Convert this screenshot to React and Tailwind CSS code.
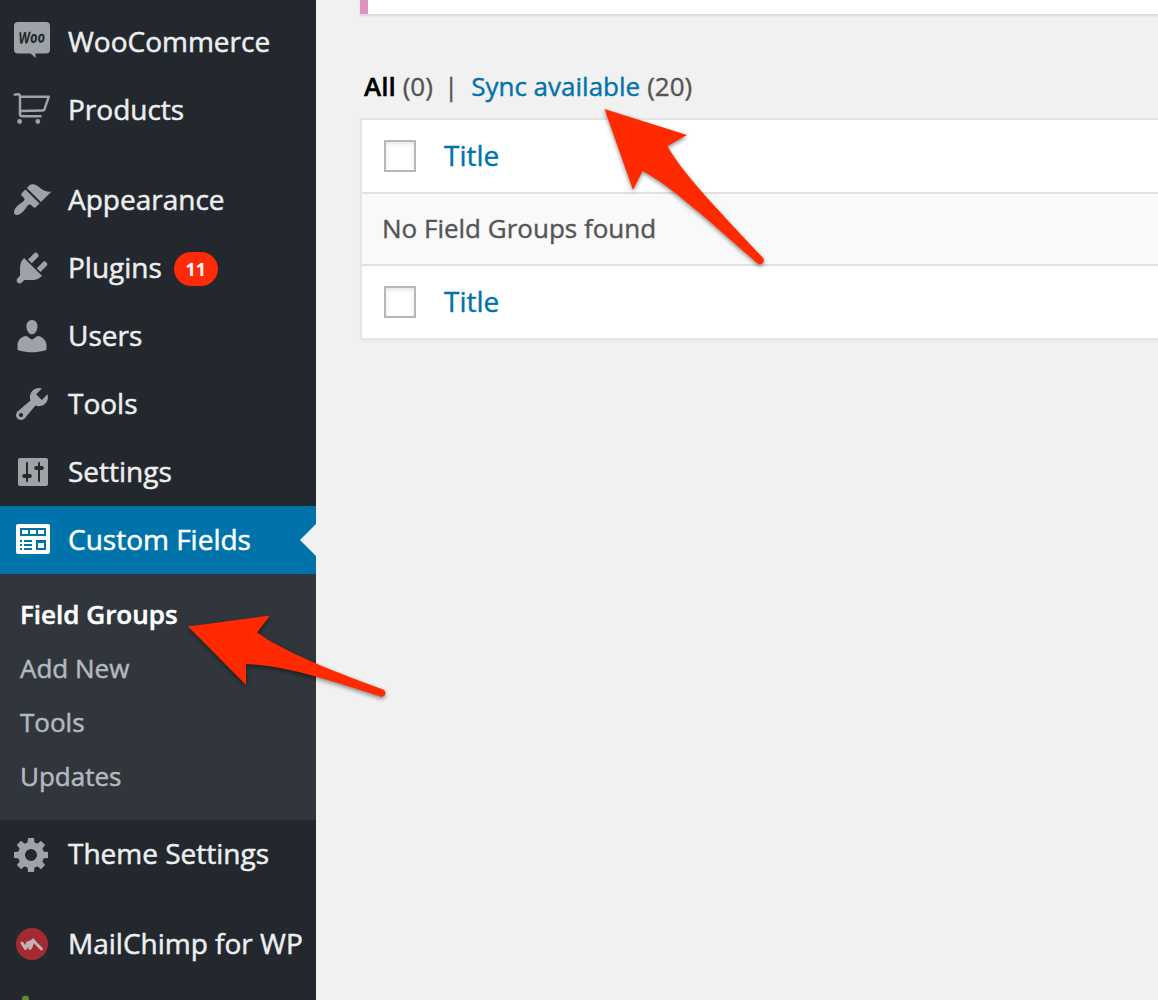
import React from "react";

const GRAY = "#9ea3a8";

const dash = (d) => (
  <g transform="translate(12 14) scale(2)">
    <path d={d} fill={GRAY} fillRule="evenodd" />
  </g>
);

const icons = {
  woo: (
    <>
      <path d="M18 14h28a4 4 0 0 1 4 4v23.500a4 4 0 0 1-4 4H35.500V50l-4.800-4.500H18a4 4 0 0 1-4-4V18a4 4 0 0 1 4-4z" fill={GRAY} />
      <text x="18.500" y="35" textLength="26.500" lengthAdjust="spacingAndGlyphs" transform="rotate(-3 32 30)" className="font-['Open_Sans',sans-serif] text-[16px] font-bold italic" fill="#23282d">Woo</text>
    </>
  ),
  cart: (
    <g fill="none" stroke={GRAY} strokeWidth="2.500" strokeLinecap="round" strokeLinejoin="round">
      <path d="M14.800 18.700c1.700-.700 5-1.300 5.200 1.800V38c0 1.600.800 2.300 2.300 2.300H40.500" />
      <path d="M20 20.700h28.800L44.500 33.200c-.400 1-.900 1.300-1.800 1.300L20.500 35" />
      <circle cx="19.600" cy="45.500" r="2.400" fill={GRAY} stroke="none" />
      <circle cx="37.800" cy="45.500" r="2.400" fill={GRAY} stroke="none" />
    </g>
  ),
  appearance: dash(
    "M14.480 11.060L7.410 3.990l1.500-1.500c.5-.56 2.300-.47 3.510.32 1.210.8 1.430 1.280 2.910 2.100 1.180.64 2.450 1.260 4.450.85zm-.71.71L6.700 4.700 4.930 6.470c-.39.39-.39 1.020 0 1.410l1.060 1.060c.39.39.39 1.030 0 1.420-.6.6-1.430 1.110-2.210 1.690-.35.26-.7.53-1.010.84C1.430 14.230.4 16.080 1.400 17.070c.99 1 2.840-.03 4.180-1.360.31-.31.58-.66.85-1.020.57-.78 1.080-1.610 1.690-2.210.39-.39 1.020-.39 1.410 0l1.060 1.060c.39.39 1.020.39 1.410 0z"
  ),
  plugins: dash(
    "M13.110 4.360L9.870 7.600 8 5.730l3.240-3.240c.35-.34 1.050-.2 1.560.32.52.51.66 1.210.31 1.550zm-8 1.770l.91-1.120 9.010 9.010-1.190.84c-.71.71-2.630 1.160-3.820 1.160H6.140L4.900 17.260c-.59.59-1.540.59-2.120 0-.59-.58-.59-1.530 0-2.120l1.240-1.240v-3.880c0-1.130.4-3.190 1.090-3.890zm7.260 3.970l3.240-3.240c.34-.35 1.040-.21 1.550.31.52.51.66 1.210.31 1.550l-3.240 3.250z"
  ),
  users: dash(
    "M10 9.250c-2.270 0-2.730-3.440-2.730-3.440C7 4.020 7.820 2 9.970 2c2.160 0 2.980 2.020 2.710 3.810 0 0-.41 3.440-2.680 3.440zm0 2.570L12.720 10c2.390 0 4.520 2.330 4.520 4.530v2.490s-3.650 1.130-7.240 1.130c-3.650 0-7.240-1.130-7.240-1.130v-2.490c0-2.250 1.940-4.480 4.470-4.480z"
  ),
  tools: dash(
    "M16.680 9.770c-1.340 1.340-3.300 1.670-4.950.99l-5.410 6.520c-.99.99-2.590.99-3.580 0s-.99-2.590 0-3.570l6.520-5.420c-.68-1.650-.35-3.610.99-4.950 1.280-1.280 3.120-1.620 4.720-1.060l-2.890 2.890 2.820 2.820 2.860-2.870c.53 1.580.18 3.390-1.080 4.650zM3.810 16.210c.4.39 1.040.39 1.430 0 .4-.4.4-1.040 0-1.430-.39-.4-1.030-.4-1.430 0-.39.39-.39 1.030 0 1.430z"
  ),
  settings: (
    <>
      <rect x="18" y="20" width="30" height="28" rx="2" fill={GRAY} />
      <g stroke="#23282d" strokeLinecap="round">
        <path d="M27 25v18M39 25v18" strokeWidth="2" />
        <path d="M24.200 38h5.600M36.200 30h5.600" strokeWidth="4" />
      </g>
    </>
  ),
  fields: (
    <>
      <rect x="16" y="18" width="34" height="30" rx="2" fill="#fff" />
      <path d="M20 22h26v8H20zM20 34h2v2h-2zM20 38h2v2h-2zM20 42h2v2h-2zM24 34h8v2h-8zM24 38h8v2h-8zM24 42h8v2h-8zM36 34h10v10H36z" fill="#0073aa" />
      <path d="M22 24h6v4h-6zM30 24h6v4h-6zM38 24h6v4h-6zM38 37h6v5h-6z" fill="#fff" />
    </>
  ),
  gear: (
    <g fill={GRAY}>
      <circle cx="31" cy="35" r="9.500" fill="none" stroke={GRAY} strokeWidth="7" />
      {[0, 45, 90, 135].map((a) => (
        <path key={a} d="M28 18h6l.6 6h-7.200zM28 52h6l.6-6h-7.200z" transform={`rotate(${a} 31 35)`} />
      ))}
    </g>
  ),
  mailchimp: (
    <>
      <circle cx="32" cy="34" r="16" fill="#a32a31" />
      <path d="M22 33l3.500 5.500 2-5.500 2.500 5.500 3-8.500 3 3.500 5.500 5.500M28 33l5-2-2 6" fill="none" stroke="#c5b2b4" strokeWidth="3" strokeLinejoin="round" strokeLinecap="round" />
    </>
  ),
  leaf: <path d="M22 22v-2.500c1-2.500 6-2.500 7 0V22z" fill="#5f8d2a" />,
};

function Icon({ name }) {
  return (
    <svg viewBox="0 0 68 68" className="h-[68px] w-[68px] shrink-0" aria-hidden="true">
      {icons[name]}
    </svg>
  );
}

function MenuItem({ icon, label, badge }) {
  return (
    <li className="flex h-[68px] shrink-0 items-center whitespace-nowrap text-[28px] text-[#eee]">
      <Icon name={icon} />
      <span className="mb-0.5 leading-9 [-webkit-text-stroke:0.5px]">{label}</span>
      {badge && (
        <span className="ml-3 mt-[2px] flex h-[34px] w-11 items-center justify-center rounded-full bg-[#ff2a08] text-lg font-bold text-white">
          {badge}
        </span>
      )}
    </li>
  );
}

function Sidebar() {
  return (
    <nav className="h-full w-[316px] shrink-0 overflow-hidden bg-[#22282e] pt-2">
      <ul className="flex flex-col">
        <MenuItem icon="woo" label="WooCommerce" />
        <MenuItem icon="cart" label="Products" />
        <li className="h-[22px]" />
        <MenuItem icon="appearance" label="Appearance" />
        <MenuItem icon="plugins" label="Plugins" badge="11" />
        <MenuItem icon="users" label="Users" />
        <MenuItem icon="tools" label="Tools" />
        <MenuItem icon="settings" label="Settings" />
        <li className="flex h-[68px] items-center whitespace-nowrap bg-[#0073aa] text-[28px] text-white">
          <Icon name="fields" />
          <span className="mb-0.5 leading-9 [-webkit-text-stroke:0.5px]">Custom Fields</span>
          <span className="ml-auto h-0 w-0 border-y-[16px] border-r-[16px] border-y-transparent border-r-[#f1f1f1]" />
        </li>
        <li className="h-[246px] bg-[#31363d] pl-5 pt-[13px] text-[26px] text-[#b4b9be] [-webkit-text-stroke:0.5px]">
          <ul>
            <li className="h-[54px] font-semibold leading-[54px] text-white">Field Groups</li>
            <li className="h-[54px] leading-[54px]">Add New</li>
            <li className="h-[54px] leading-[54px]">Tools</li>
            <li className="h-[54px] leading-[54px]">Updates</li>
          </ul>
        </li>
        <MenuItem icon="gear" label="Theme Settings" />
        <li className="h-[22px]" />
        <MenuItem icon="mailchimp" label="MailChimp for WP" />
        <MenuItem icon="leaf" label="" />
      </ul>
    </nav>
  );
}

function TitleRow() {
  return (
    <div className="flex h-[72px] items-center bg-white pl-[22px]">
      <span className="h-8 w-8 border-2 border-[#b4b9be] bg-white shadow-[inset_0_2px_4px_rgba(0,0,0,0.1)]" />
      <span className="mb-[3px] ml-7 text-[28px] leading-9 text-[#0073aa]">Title</span>
    </div>
  );
}

function Arrow({ className, viewBox, d }) {
  return (
    <svg className={className} viewBox={viewBox} aria-hidden="true">
      <path d={d} fill="#ff2a00" />
    </svg>
  );
}

export default function App() {
  return (
    <div className="relative flex h-[1000px] w-[1158px] overflow-hidden bg-[#f1f1f1] font-['Open_Sans',sans-serif]">
      <Sidebar />
      <main className="flex min-w-0 flex-1 flex-col pl-11 text-[26px] text-[#555d66] [-webkit-text-stroke:0.4px]">
        <div className="h-[14px] shrink-0 border-l-8 border-[#de91c3] bg-white shadow-[0_2px_2px_rgba(0,0,0,0.1)]" />
        <div className="mt-[54px] flex h-9 items-center whitespace-pre pl-1 leading-9">
          <span className="font-semibold text-black">All</span>
          <span className="ml-[7px] text-[#555]">(0)</span>
          <span className="ml-[11px] text-[#555]">|</span>
          <span className="ml-[13px] text-[#0073aa]">Sync available</span>
          <span className="ml-[7px] text-[#555]">(20)</span>
        </div>
        <section className="-mr-1 mt-[14px] border-2 border-[#e5e5e5] shadow-[0_2px_2px_rgba(0,0,0,0.04)]">
          <TitleRow />
          <div className="flex h-[74px] items-center border-y-2 border-[#e1e1e1] bg-[#f9f9f9] pb-0.5 pl-5 text-[#555]">No Field Groups found</div>
          <TitleRow />
        </section>
      </main>
      <Arrow
        className="absolute left-[590px] top-[90px] h-[190px] w-[190px] drop-shadow-[0_2px_2px_rgba(0,0,0,0.45)]"
        viewBox="590 90 190 190"
        d="M604.500 109L687 135l-19.500 11C680 170 715 207 762.700 257.500c3.500 4-1.200 9-5.700 5.500C705 217 665 182 642.500 171L633 190z"
      />
      <Arrow
        className="absolute left-[180px] top-[600px] h-[110px] w-[220px] drop-shadow-[0_2px_2px_rgba(0,0,0,0.45)]"
        viewBox="180 600 220 110"
        d="M188 626.500L270 615.500 257 632.500C285 652 325 668 383 689.500c4.500 2 2.500 8.300-2.500 7C335 682 285 665 246 664v21z"
      />
    </div>
  );
}
